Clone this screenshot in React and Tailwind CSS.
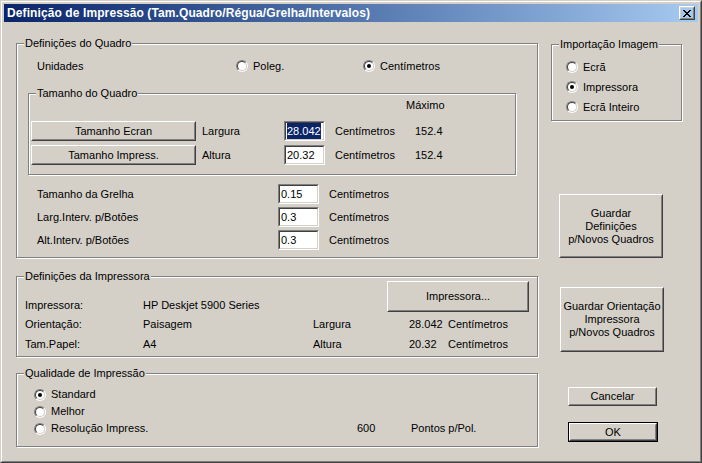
import React from 'react';

// Win2k style pieces
function Radio({ checked }) {
  return (
    <span className="inline-flex w-[12px] h-[12px] shrink-0 rounded-full border border-t-[#808080] border-l-[#808080] border-r-white border-b-white">
      <span className="flex items-center justify-center w-full h-full rounded-full bg-white border border-t-[#404040] border-l-[#404040] border-r-[#d4d0c8] border-b-[#d4d0c8]">
        {checked && <span className="w-[4px] h-[4px] rounded-full bg-black" />}
      </span>
    </span>
  );
}

function Button({ className = '', isDefault = false, children }) {
  return (
    <div className={`shrink-0 ${isDefault ? 'border border-black' : ''} ${className}`}>
      <div className="h-full border border-t-white border-l-white border-r-[#404040] border-b-[#404040]">
        <div className="h-full flex items-center justify-center text-center border border-t-[#d4d0c8] border-l-[#d4d0c8] border-r-[#808080] border-b-[#808080]">
          {children}
        </div>
      </div>
    </div>
  );
}

function Field({ value, selected = false, className = '' }) {
  return (
    <div className={`shrink-0 w-[41px] h-[20px] border border-t-[#808080] border-l-[#808080] border-r-white border-b-white ${className}`}>
      <div className="h-full flex items-stretch pl-[1px] bg-white border border-t-[#404040] border-l-[#404040] border-r-[#d4d0c8] border-b-[#d4d0c8]">
        <span className={`flex items-center ${selected ? 'bg-[#0a246a] text-white' : ''}`}>{value}</span>
      </div>
    </div>
  );
}

function Group({ label, className = '', children }) {
  return (
    <fieldset className={`shrink-0 border border-[#808080] shadow-[inset_1px_1px_0_#fff,1px_1px_0_#fff] ${className}`}>
      <legend className="ml-[7px] px-[1px] leading-[13px] bg-[#d4d0c8]">{label}</legend>
      {children}
    </fieldset>
  );
}

function CloseGlyph() {
  const rects = [
    [0, 0], [6, 0], [1, 1], [5, 1], [2, 2], [4, 2], [3, 3], [2, 4], [4, 4], [1, 5], [5, 5], [0, 6], [6, 6],
  ];
  return (
    <svg width="8" height="7" viewBox="0 0 8 7" shapeRendering="crispEdges">
      {rects.map(([x, y], i) => (
        <rect key={i} x={x} y={y} width="2" height="1" fill="#000" />
      ))}
    </svg>
  );
}

export default function App() {
  return (
    <div className="w-[702px] h-[463px] bg-[#d4d0c8] text-black text-[11px] leading-[13px] font-['Liberation_Sans',Arial,sans-serif] border border-t-[#d4d0c8] border-l-[#d4d0c8] border-r-[#404040] border-b-[#404040]">
      <div className="h-full p-[2px] border border-t-white border-l-white border-r-[#808080] border-b-[#808080]">
        {/* Title bar */}
        <div className="h-[18px] flex items-center bg-linear-to-r from-[#0a246a] to-[#a6caf0]">
          <span className="pl-[3px] text-white font-bold text-[12px] tracking-[0.1px]">
            Definição de Impressão (Tam.Quadro/Régua/Grelha/Intervalos)
          </span>
          <Button className="ml-auto mr-[3px] w-[16px] h-[14px]">
            <CloseGlyph />
          </Button>
        </div>

        {/* Client */}
        <div className="flex">
          {/* Left column */}
          <div className="ml-[12px] w-[522px] flex flex-col">
            <Group label="Definições do Quadro" className="mt-[15px] w-[522px] h-[221px]">
              <div className="mt-[9px] h-[14px] flex items-center">
                <span className="ml-[20px] w-[199px]">Unidades</span>
                <span className="w-[127px] flex items-center gap-[5px]">
                  <Radio />
                  Poleg.
                </span>
                <span className="flex items-center gap-[5px]">
                  <Radio checked />
                  Centímetros
                </span>
              </div>

              <Group label="Tamanho do Quadro" className="mt-[14px] ml-[11px] w-[488px] h-[88px]">
                <div className="-mt-[1px] h-[13px] pl-[377px]">Máximo</div>
                <div className="mt-[9px] h-[20px] flex items-center">
                  <Button className="ml-[2px] w-[165px] h-[20px]">Tamanho Ecran</Button>
                  <span className="ml-[6px] w-[82px]">Largura</span>
                  <Field value="28.042" selected />
                  <span className="ml-[10px] w-[80px]">Centímetros</span>
                  <span>152.4</span>
                </div>
                <div className="mt-[4px] h-[20px] flex items-center">
                  <Button className="ml-[2px] w-[165px] h-[20px]">Tamanho Impress.</Button>
                  <span className="ml-[6px] w-[82px]">Altura</span>
                  <Field value="20.32" />
                  <span className="ml-[10px] w-[80px]">Centímetros</span>
                  <span>152.4</span>
                </div>
              </Group>

              <div className="mt-[9px] flex flex-col gap-[3px]">
                {[
                  ['Tamanho da Grelha', '0.15'],
                  ['Larg.Interv. p/Botões', '0.3'],
                  ['Alt.Interv. p/Botões', '0.3'],
                ].map(([label, value]) => (
                  <div key={label} className="h-[20px] flex items-center">
                    <span className="ml-[20px] w-[241px]">{label}</span>
                    <Field value={value} />
                    <span className="ml-[10px]">Centímetros</span>
                  </div>
                ))}
              </div>
            </Group>

            <Group label="Definições da Impressora" className="mt-[12px] w-[522px] h-[87px]">
              <div className="-mt-[2px] h-[31px] flex items-end">
                <span className="ml-[8px] w-[118px]">Impressora:</span>
                <span className="w-[170px]">HP Deskjet 5900 Series</span>
                <Button className="self-start ml-auto mr-[8px] w-[142px] h-[31px]">Impressora...</Button>
              </div>
              <div className="mt-[6px] h-[13px] flex">
                <span className="ml-[8px] w-[118px]">Orientação:</span>
                <span className="w-[170px]">Paisagem</span>
                <span className="w-[96px]">Largura</span>
                <span className="w-[39px]">28.042</span>
                <span>Centímetros</span>
              </div>
              <div className="mt-[7px] h-[13px] flex">
                <span className="ml-[8px] w-[118px]">Tam.Papel:</span>
                <span className="w-[170px]">A4</span>
                <span className="w-[96px]">Altura</span>
                <span className="w-[39px]">20.32</span>
                <span>Centímetros</span>
              </div>
            </Group>

            <Group label="Qualidade de Impressão" className="mt-[10px] w-[522px] h-[80px]">
              <div className="mt-[6px] flex flex-col">
                <div className="h-[17px] flex items-center">
                  <span className="ml-[17px] flex items-center gap-[5px]">
                    <Radio checked />
                    Standard
                  </span>
                </div>
                <div className="h-[17px] flex items-center">
                  <span className="ml-[17px] flex items-center gap-[5px]">
                    <Radio />
                    Melhor
                  </span>
                </div>
                <div className="h-[17px] flex items-center">
                  <span className="ml-[17px] w-[323px] flex items-center gap-[5px]">
                    <Radio />
                    Resolução Impress.
                  </span>
                  <span className="w-[54px]">600</span>
                  <span>Pontos p/Pol.</span>
                </div>
              </div>
            </Group>
          </div>

          {/* Right column */}
          <div className="ml-[13px] w-[132px] flex flex-col">
            <Group label="Importação Imagem" className="mt-[16px] w-[131px] h-[83px]">
              <div className="mt-[6px] flex flex-col">
                {[
                  ['Ecrã', false],
                  ['Impressora', true],
                  ['Ecrã Inteiro', false],
                ].map(([label, checked]) => (
                  <div key={label} className="h-[20px] flex items-center">
                    <span className="ml-[14px] flex items-center gap-[5px]">
                      <Radio checked={checked} />
                      {label}
                    </span>
                  </div>
                ))}
              </div>
            </Group>

            <Button className="mt-[73px] ml-[8px] w-[104px] h-[64px]">
              Guardar
              <br />
              Definições
              <br />
              p/Novos Quadros
            </Button>
            <Button className="mt-[29px] ml-[9px] w-[104px] h-[65px]">
              Guardar Orientação
              <br />
              Impressora
              <br />
              p/Novos Quadros
            </Button>
            <Button className="mt-[35px] ml-[17px] w-[89px] h-[19px]">Cancelar</Button>
            <Button isDefault className="mt-[16px] ml-[17px] w-[90px] h-[20px]">OK</Button>
          </div>
        </div>
      </div>
    </div>
  );
}
